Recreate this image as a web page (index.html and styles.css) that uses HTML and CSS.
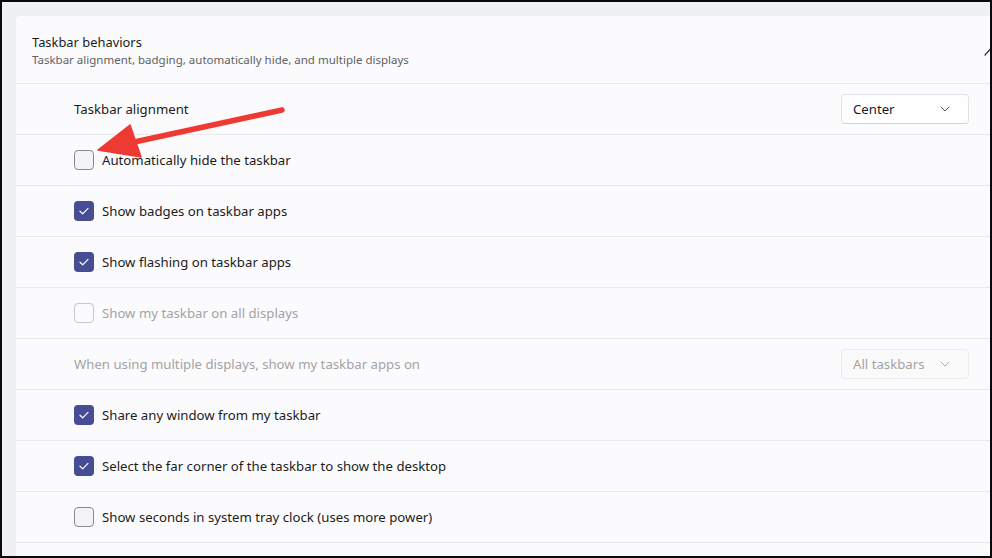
FILE: index.html
```html
<!DOCTYPE html>
<html lang="en">
<head>
<meta charset="utf-8">
<title>Taskbar behaviors</title>
<link rel="stylesheet" href="styles.css">
</head>
<body>
<div class="frame">
  <div class="page">
    <section class="card">
      <header class="card-head">
        <div class="head-text">
          <div class="head-title">Taskbar behaviors</div>
          <div class="head-sub">Taskbar alignment, badging, automatically hide, and multiple displays</div>
        </div>
        <svg class="chev-up" width="12" height="8" viewBox="0 0 12 8"><path d="M1 7 L6 1.5 L11 7" fill="none" stroke="#333" stroke-width="1.2" stroke-linecap="round" stroke-linejoin="round"/></svg>
      </header>

      <div class="row">
        <span class="label">Taskbar alignment</span>
        <div class="select">
          <span>Center</span>
          <svg class="chev" width="10" height="6" viewBox="0 0 10 6"><path d="M1 1 L5 5 L9 1" fill="none" stroke="#555" stroke-width="1" stroke-linecap="round" stroke-linejoin="round"/></svg>
        </div>
      </div>

      <div class="row">
        <span class="box"></span>
        <span class="label">Automatically hide the taskbar</span>
      </div>

      <div class="row">
        <span class="box checked"><svg width="20" height="20" viewBox="0 0 20 20"><path d="M6 10.2 L8.7 12.8 L14 7.4" fill="none" stroke="#fff" stroke-width="1.2" stroke-linecap="round" stroke-linejoin="round"/></svg></span>
        <span class="label">Show badges on taskbar apps</span>
      </div>

      <div class="row">
        <span class="box checked"><svg width="20" height="20" viewBox="0 0 20 20"><path d="M6 10.2 L8.7 12.8 L14 7.4" fill="none" stroke="#fff" stroke-width="1.2" stroke-linecap="round" stroke-linejoin="round"/></svg></span>
        <span class="label">Show flashing on taskbar apps</span>
      </div>

      <div class="row disabled">
        <span class="box"></span>
        <span class="label">Show my taskbar on all displays</span>
      </div>

      <div class="row disabled">
        <span class="label">When using multiple displays, show my taskbar apps on</span>
        <div class="select">
          <span>All taskbars</span>
          <svg class="chev" width="10" height="6" viewBox="0 0 10 6"><path d="M1 1 L5 5 L9 1" fill="none" stroke="#aaa" stroke-width="1" stroke-linecap="round" stroke-linejoin="round"/></svg>
        </div>
      </div>

      <div class="row">
        <span class="box checked"><svg width="20" height="20" viewBox="0 0 20 20"><path d="M6 10.2 L8.7 12.8 L14 7.4" fill="none" stroke="#fff" stroke-width="1.2" stroke-linecap="round" stroke-linejoin="round"/></svg></span>
        <span class="label">Share any window from my taskbar</span>
      </div>

      <div class="row">
        <span class="box checked"><svg width="20" height="20" viewBox="0 0 20 20"><path d="M6 10.2 L8.7 12.8 L14 7.4" fill="none" stroke="#fff" stroke-width="1.2" stroke-linecap="round" stroke-linejoin="round"/></svg></span>
        <span class="label">Select the far corner of the taskbar to show the desktop</span>
      </div>

      <div class="row">
        <span class="box"></span>
        <span class="label">Show seconds in system tray clock (uses more power)</span>
      </div>

      <div class="row"></div>
    </section>
  </div>

  <svg class="arrow" width="992" height="558" viewBox="0 0 992 558">
    <line x1="282" y1="110" x2="132" y2="142.5" stroke="#ee3a33" stroke-width="5.5" stroke-linecap="round"/>
    <polygon points="98,150 130,125 141,157" fill="#ee3a33" stroke="#ee3a33" stroke-width="1.5" stroke-linejoin="round"/>
  </svg>
</div>
</body>
</html>
```

FILE: styles.css
```css
html, body {
  margin: 0;
  padding: 0;
}

body {
  font-family: "Segoe UI", "Noto Sans", "Liberation Sans", sans-serif;
  color: #1b1b1b;
  background: #000;
}

.frame {
  position: relative;
  width: 992px;
  height: 558px;
  box-sizing: border-box;
  border: 2px solid #0a0a0a;
  background: #eef0f3;
  overflow: hidden;
}

.page {
  padding: 14px 0 0 14px;
}

.card {
  width: 1000px;
  background: #fbfbfd;
  border-radius: 4px 0 0 0;
}

.card-head {
  display: flex;
  align-items: center;
  height: 67px;
  padding: 0 20px 0 16px;
  box-sizing: border-box;
}

.head-text {
  display: flex;
  flex-direction: column;
  gap: 1px;
  margin-top: 2px;
}

.head-title {
  font-size: 12.9px;
  line-height: 18px;
}

.head-sub {
  font-size: 11.5px;
  line-height: 16px;
  color: #616161;
}

.chev-up {
  margin-left: auto;
  margin-top: 4px;
}

.row {
  display: flex;
  align-items: center;
  height: 50px;
  border-top: 1px solid #e7e8eb;
  padding: 0 47px 0 58px;
  font-size: 13.2px;
}

.label {
  line-height: 18px;
}

.box {
  width: 20px;
  height: 20px;
  box-sizing: border-box;
  border: 1px solid #8b8b8b;
  border-radius: 4px;
  background: #f3f3f5;
  margin-right: 8px;
  flex: none;
  display: flex;
}

.box.checked {
  border: none;
  background: #474d94;
}

.select {
  margin-left: auto;
  width: 128px;
  height: 30px;
  box-sizing: border-box;
  border: 1px solid #e3e3e5;
  border-bottom-color: #d3d3d6;
  border-radius: 4px;
  background: #fefefe;
  display: flex;
  align-items: center;
  padding: 0 18px 0 11px;
}

.select .chev {
  margin-left: auto;
}

.disabled .label,
.disabled .select span {
  color: #a3a3a3;
}

.disabled .box {
  border-color: #c9c9cb;
  background: #fbfbfd;
}

.disabled .select {
  background: #fafafb;
  border-color: #ececee;
}

.arrow {
  position: absolute;
  left: -2px;
  top: -2px;
  pointer-events: none;
}
```
